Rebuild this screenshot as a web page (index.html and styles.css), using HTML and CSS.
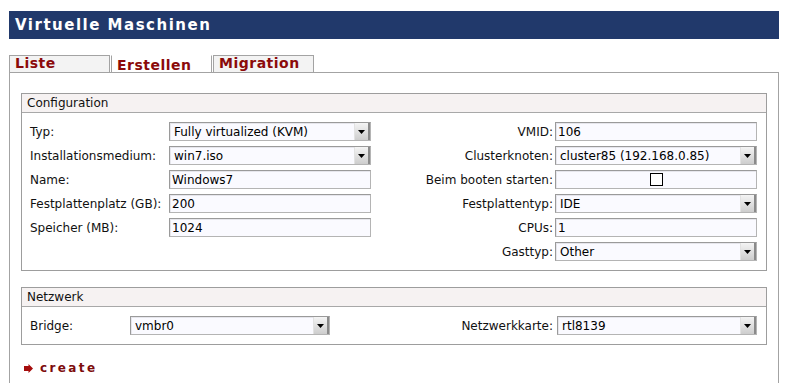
FILE: index.html
```html
<!DOCTYPE html>
<html lang="de">
<head>
  <meta charset="UTF-8" />
  <title>Virtuelle Maschinen</title>
  <link rel="stylesheet" href="styles.css">
</head>
<body>

<div class="page">
  <h1 class="title">Virtuelle Maschinen</h1>

  <div class="tabs">
    <a class="tab" href="#">Liste</a>
    <a class="tab active" href="#">Erstellen</a>
    <a class="tab" href="#">Migration</a>
  </div>

  <div class="panel">
    <!-- Configuration -->
    <div class="box">
      <div class="box-head">Configuration</div>
      <div class="box-body">
        <div class="col col-left">
          <div class="row">
            <label>Typ:</label>
            <span class="select"><select><option>Fully virtualized (KVM)</option></select><span class="arrow"><svg width="7" height="4" viewBox="0 0 7 4"><path d="M0 0h7L3.5 4z" fill="#000"/></svg></span></span>
          </div>
          <div class="row">
            <label>Installationsmedium:</label>
            <span class="select"><select><option>win7.iso</option></select><span class="arrow"><svg width="7" height="4" viewBox="0 0 7 4"><path d="M0 0h7L3.5 4z" fill="#000"/></svg></span></span>
          </div>
          <div class="row">
            <label>Name:</label>
            <input class="field" type="text" value="Windows7">
          </div>
          <div class="row">
            <label>Festplattenplatz (GB):</label>
            <input class="field" type="text" value="200">
          </div>
          <div class="row">
            <label>Speicher (MB):</label>
            <input class="field" type="text" value="1024">
          </div>
        </div>

        <div class="col col-right">
          <div class="row">
            <label>VMID:</label>
            <input class="field" type="text" value="106">
          </div>
          <div class="row">
            <label>Clusterknoten:</label>
            <span class="select"><select><option>cluster85 (192.168.0.85)</option></select><span class="arrow"><svg width="7" height="4" viewBox="0 0 7 4"><path d="M0 0h7L3.5 4z" fill="#000"/></svg></span></span>
          </div>
          <div class="row">
            <label>Beim booten starten:</label>
            <span class="field check-field"><input type="checkbox"></span>
          </div>
          <div class="row">
            <label>Festplattentyp:</label>
            <span class="select"><select><option>IDE</option></select><span class="arrow"><svg width="7" height="4" viewBox="0 0 7 4"><path d="M0 0h7L3.5 4z" fill="#000"/></svg></span></span>
          </div>
          <div class="row">
            <label>CPUs:</label>
            <input class="field" type="text" value="1">
          </div>
          <div class="row">
            <label>Gasttyp:</label>
            <span class="select"><select><option>Other</option></select><span class="arrow"><svg width="7" height="4" viewBox="0 0 7 4"><path d="M0 0h7L3.5 4z" fill="#000"/></svg></span></span>
          </div>
        </div>
      </div>
    </div>

    <!-- Netzwerk -->
    <div class="box box-net">
      <div class="box-head">Netzwerk</div>
      <div class="box-body">
        <div class="col col-left net-left">
          <div class="row">
            <label>Bridge:</label>
            <span class="select"><select><option>vmbr0</option></select><span class="arrow"><svg width="7" height="4" viewBox="0 0 7 4"><path d="M0 0h7L3.5 4z" fill="#000"/></svg></span></span>
          </div>
        </div>
        <div class="col col-right net-right">
          <div class="row">
            <label>Netzwerkkarte:</label>
            <span class="select"><select><option>rtl8139</option></select><span class="arrow"><svg width="7" height="4" viewBox="0 0 7 4"><path d="M0 0h7L3.5 4z" fill="#000"/></svg></span></span>
          </div>
        </div>
      </div>
    </div>

    <a class="create" href="#">
      <svg width="9" height="9" viewBox="0 0 9 9"><path d="M0 2h4.5V0L9 4.5 4.5 9V7H0z" fill="#a50d0d"/></svg>
      create
    </a>
  </div>
</div>

</body>
</html>
```

FILE: styles.css
```css
* {
  box-sizing: border-box;
}

body {
  margin: 0;
  background: #ffffff;
  color: #111;
  font-family: 'DejaVu Sans', sans-serif;
  font-size: 12px;
}

.page {
  padding: 11px 7px 0 9px;
}

.title {
  margin: 0;
  height: 28px;
  line-height: 28px;
  padding-left: 6px;
  background-color: #21396b;
  color: #ffffff;
  font-size: 15px;
  font-weight: bold;
  letter-spacing: 0.1em;
}

/* Tabs */
.tabs {
  display: flex;
  margin-top: 16px;
}

.tab {
  width: 101px;
  height: 17px;
  margin-right: 1px;
  padding-left: 5px;
  border: 1px solid #a3a3a3;
  border-bottom: none;
  background-color: #f3f3f3;
  color: #8b0a0a;
  font-size: 14px;
  font-weight: bold;
  line-height: 15px;
  letter-spacing: 0.5px;
  text-decoration: none;
}

.tab.active {
  background-color: #ffffff;
  border-top-color: #ffffff;
  padding-top: 2px;
}

/* Panel */
.panel {
  border: 1px solid #a3a3a3;
  border-bottom: none;
  padding: 20px 11px 20px 11px;
}

.box {
  border: 1px solid #9d9d9d;
}

.box-net {
  margin-top: 16px;
}

.box-head {
  height: 19px;
  line-height: 18px;
  padding-left: 5px;
  background-color: #f6f2f2;
  border-bottom: 1px solid #a8a8a8;
  color: #111;
}

.box-body {
  display: flex;
  padding: 7px 9px 6px 8px;
}

.col-left {
  width: 341px;
}

.col-right {
  flex: 1;
}

.row {
  display: flex;
  align-items: center;
  height: 24px;
}

.col-left label {
  width: 139px;
}

.col-right .row {
  justify-content: flex-end;
}

.col-right label {
  padding-right: 2px;
}

.net-left {
  width: 300px;
}

.net-left label {
  width: 100px;
}

.net-left .select,
.net-right .select {
  width: 200px;
}

.net-right label {
  padding-right: 4px;
}

/* Form fields */
.field,
.select {
  width: 202px;
  height: 19px;
  margin-bottom: 1px;
  border: 1px solid #9a9a9a;
  border-right-color: #b4b4b4;
  border-bottom-color: #b4b4b4;
  background-color: #fafaff;
  box-shadow: inset 1px 1px 0 #e6e6ec;
}

.field {
  padding: 0 2px;
  color: #000;
  font-family: inherit;
  font-size: 12px;
}

.select {
  display: flex;
}

.select select {
  flex: 1;
  min-width: 0;
  height: 17px;
  padding: 0 4px;
  border: none;
  background: transparent;
  color: #000;
  font-family: inherit;
  font-size: 12px;
  appearance: none;
  -webkit-appearance: none;
}

.select .arrow {
  display: flex;
  align-items: center;
  justify-content: center;
  width: 16px;
  border-left: 1px solid #e2e2e2;
  border-right: 2px solid #8a8a8a;
  background: linear-gradient(#f4f4f4, #cdcdcd);
}

.check-field {
  display: flex;
  align-items: center;
  justify-content: center;
}

.check-field input {
  width: 13px;
  height: 13px;
  margin: 0;
  border: 1px solid #000;
  background: #ffffff;
  appearance: none;
  -webkit-appearance: none;
}

/* Create link */
.create {
  display: inline-flex;
  align-items: center;
  gap: 7px;
  margin-top: 16px;
  padding-left: 3px;
  color: #7d0c0c;
  font-size: 12px;
  font-weight: bold;
  letter-spacing: 0.2em;
  text-decoration: none;
}
```
